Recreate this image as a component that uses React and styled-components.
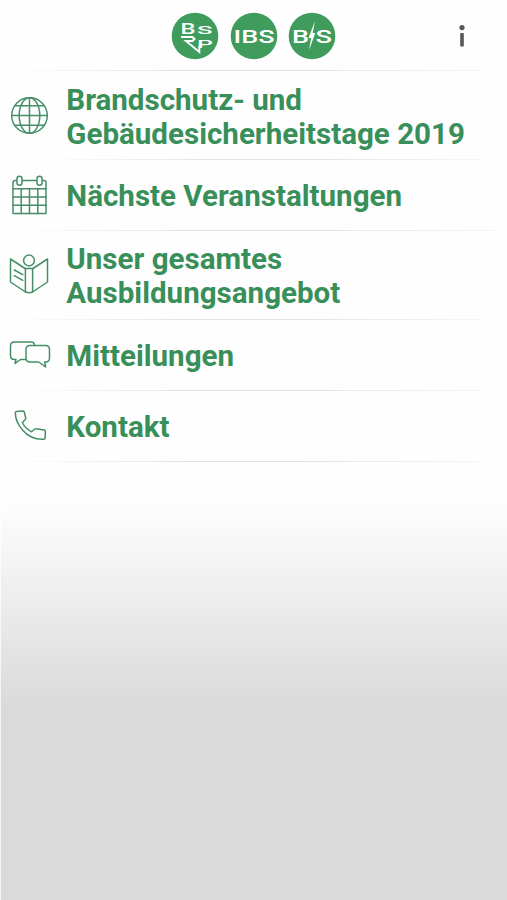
import React from "react";
import styled, { createGlobalStyle } from "styled-components";

const GlobalStyle = createGlobalStyle`
  body {
    margin: 0;
    background: #fff;
  }
`;

const Page = styled.div`
  box-sizing: border-box;
  width: 100%;
  height: 900px;
  overflow: hidden;
  border-left: 1px solid rgba(255, 255, 255, 0.7);

  background-image: linear-gradient(
    #fefefe 500px,
    #f5f5f5 555px,
    #e8e8e8 627px,
    #dadada 707px
  );
  font-family: Roboto, sans-serif;
  color: #398f5a;
`;

const Line = styled.div`
  height: 1px;
  margin: 0 ${props => props.$right || 25}px 0 ${props => props.$left || 0}px;
  background: linear-gradient(
    to right,
    rgba(225, 228, 229, 0),
    #e1e4e5 38%,
    #e1e4e5 62%,
    rgba(225, 228, 229, 0.3)
  );
`;

const Header = styled.header`
  box-sizing: border-box;
  height: 70px;
  padding: 12px 30px 0 170px;

  display: flex;
  justify-content: space-between;
  align-items: flex-start;
`;

const Logos = styled.div`
  display: flex;
  gap: 10.5px;
`;

const Logo = styled.svg`
  display: block;
  width: 48px;
  height: 48px;
`;

const LogoText = styled.text`
  font-family: Roboto, sans-serif;
  font-weight: 500;
  fill: #fff;
`;

const InfoButton = styled.button`
  padding: 11px 10px 0;
  border: 0;
  background: none;

  svg {
    display: block;
  }
`;

const Menu = styled.nav`
  display: flex;
  flex-direction: column;
`;

const Item = styled.a`
  box-sizing: border-box;
  height: ${props => (props.$tall ? 88 : 70)}px;
  padding-top: ${props => props.$top || 1}px;

  display: grid;
  grid-template-columns: 65.3px 1fr;
  align-items: center;

  color: inherit;
  text-decoration: none;
`;

const Label = styled.span`
  font-size: 29.55px;
  font-weight: 700;
  line-height: 34px;
  white-space: pre-line;
`;

const Icon = styled.svg`
  display: block;
  width: 44px;
  height: 44px;
  margin-left: 6px;

  fill: none;
  stroke: #458f68;
  stroke-width: 1.5;
  stroke-linejoin: round;
  stroke-linecap: round;
`;

const Globe = () => (
  <Icon viewBox="0 0 44 44">
    <circle cx="22.5" cy="20.5" r="17.8" />
    <ellipse cx="22.5" cy="20.5" rx="10.3" ry="17.8" />
    <path d="M22.5 2.7v35.6M4.7 20.5h35.6M8 10.8h29M8 30.2h29" />
  </Icon>
);

const Calendar = () => (
  <Icon viewBox="0 0 44 44">
    <path d="M9.5 6.5H8q-2 0-2 2V39.5h33V8.5q0-2-2-2h-1.5M15.5 6.5h14" />
    <rect x="10" y="2.2" width="5" height="9" rx="2.5" />
    <rect x="30" y="2.2" width="5" height="9" rx="2.5" />
    <path d="M6 14.8h33M6 23h33M6 31.2h33M14.2 14.8v24.7M22.5 14.8v24.7M30.8 14.8v24.7" />
  </Icon>
);

const Book = () => (
  <Icon viewBox="0 0 44 44">
    <circle cx="22" cy="6.5" r="5.4" />
    <path d="M18 14.5 3.5 5v23l15 10q3.5 1.5 7 0l15-10V5L26 14.5" />
    <path d="M18.4 14.5V38M25.6 14.5V38M18.4 14.5h7.2M7.3 16l8.5 4.7M7.3 21.7l8.5 4.7" />
  </Icon>
);

const Chat = () => (
  <Icon viewBox="0 0 44 44">
    <path d="M18.5 25.5h-5l-5.5 4 1-4H7.5q-4 0-4-4V12q0-4 4-4H24q3.5 0 3.5 3.5" />
    <path d="M23 11.5h15.5q4 0 4 4V24q0 4-4 4h-.8l1 5-7-5H23q-4 0-4-4v-8.5q0-4 4-4Z" />
  </Icon>
);

const Phone = () => (
  <Icon viewBox="0 0 44 44">
    <path d="m9.5 6.5 6.5-.5q1 0 1.3 1l1.4 6q.2 1-.6 1.800l-2.800 2.700q3 6 9.200 9.300l3-2.600q.8-.7 1.700-.5l8 1.300q1.300.3 1.200 1.500l-.3 6.500q0 1.200-1.300 1.300Q24 35 15.500 25 8.500 17 8.300 8q0-1.400 1.200-1.500Z" />
  </Icon>
);

const items = [
  { icon: Globe, text: "Brandschutz- und\nGebäudesicherheitstage 2019", tall: true, top: 3, left: 38, right: 25 },
  { icon: Calendar, text: "Nächste Veranstaltungen", left: 5, right: 10 },
  { icon: Book, text: "Unser gesamtes\nAusbildungsangebot", tall: true, left: 5, right: 25 },
  { icon: Chat, text: "Mitteilungen", left: 10, right: 25 },
  { icon: Phone, text: "Kontakt", left: 5, right: 25 }
];

const App = () => (
  <>
    <GlobalStyle />
    <Page>
      <Header>
        <Logos>
          <Logo viewBox="0 0 48 48">
            <circle cx="24" cy="24" r="23.3" fill="#3f9c5c" />
            <LogoText x="9.5" y="21.5" fontSize="14" textLength="15" lengthAdjust="spacingAndGlyphs">B</LogoText>
            <LogoText x="26" y="22" fontSize="11.5" textLength="15.5" lengthAdjust="spacingAndGlyphs">S</LogoText>
            <LogoText x="26" y="36" fontSize="11.5" textLength="16" lengthAdjust="spacingAndGlyphs">P</LogoText>
            {/* downward wedge joining the letters */}
            <path d="M10 25h11.5l2 2-2 2H15l13.3 11V34" fill="none" stroke="#fff" strokeWidth="2" />
          </Logo>
          <Logo viewBox="0 0 48 48">
            <circle cx="24" cy="24" r="23.3" fill="#3f9c5c" />
            <LogoText x="3.5" y="30.5" fontSize="19" textLength="41" lengthAdjust="spacingAndGlyphs">IBS</LogoText>
          </Logo>
          <Logo viewBox="0 0 48 48">
            <circle cx="24" cy="24" r="23.3" fill="#3f9c5c" />
            <LogoText x="4" y="30.5" fontSize="19" textLength="17" lengthAdjust="spacingAndGlyphs">B</LogoText>
            <LogoText x="27.5" y="30.5" fontSize="19" textLength="16.5" lengthAdjust="spacingAndGlyphs">S</LogoText>
            <path d="m27 9-6.5 17h2.600l-2 12 6.200-17h-2.600Z" fill="#fff" />
          </Logo>
        </Logos>
        <InfoButton aria-label="Info">
          <svg width="10" height="26" viewBox="0 0 10 26" fill="#565656">
            <circle cx="5" cy="4.6" r="2.6" />
            <rect x="3.2" y="10" width="3.6" height="13.5" rx=".8" />
          </svg>
        </InfoButton>
      </Header>
      <Line />
      <Menu>
        {items.map(item => (
          <React.Fragment key={item.text}>
            <Item href="#" $tall={item.tall} $top={item.top}>
              <item.icon />
              <Label>{item.text}</Label>
            </Item>
            <Line $left={item.left} $right={item.right} />
          </React.Fragment>
        ))}
      </Menu>
    </Page>
  </>
);

export default App;
